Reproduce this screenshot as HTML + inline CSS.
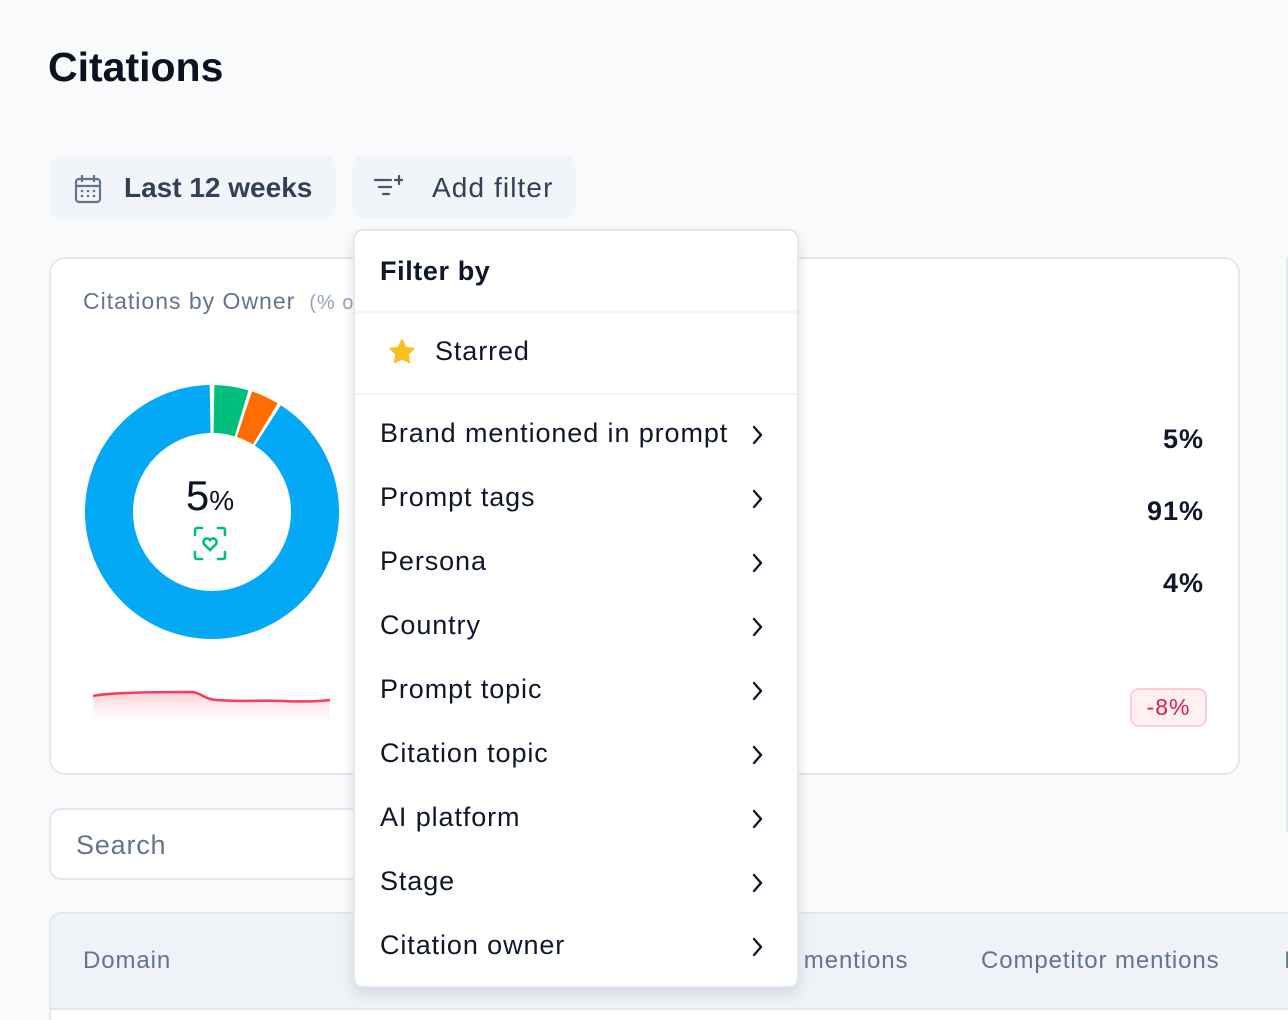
<!DOCTYPE html>
<html><head><meta charset="utf-8"><style>
*{box-sizing:border-box;margin:0;padding:0}
html,body{width:1288px;height:1020px;overflow:hidden}
body{background:#f8fafc;font-family:"Liberation Sans",sans-serif;position:relative;color:#0f172a}
.abs{position:absolute}
h1{position:absolute;left:48px;top:44px;font-size:41px;font-weight:700;color:#0b1220}
.btn{position:absolute;top:156px;height:63px;background:#f1f5f9;border-radius:12px;color:#334155;font-size:28px;font-weight:700;display:flex;align-items:center}
.card{position:absolute;left:49px;top:257px;width:1191px;height:518px;background:#fff;border:2px solid #e2e8f0;border-radius:16px}
.val{position:absolute;right:34px;font-size:27px;font-weight:700;color:#0f172a;letter-spacing:1px}
.dd{position:absolute;left:353px;top:229px;width:446px;height:759px;background:#fff;border:2px solid #e2e8f0;border-radius:10px;box-shadow:0 6px 14px rgba(15,23,42,.12)}
.item{position:absolute;left:25px;font-size:27px;color:#0f172a;letter-spacing:0.9px;white-space:nowrap}
.th{position:absolute;top:947px;font-size:24px;color:#64748b;letter-spacing:0.9px}
</style></head><body>
<h1>Citations</h1>
<div class="btn" style="left:49px;width:287px">
<svg class="abs" style="left:25px;top:18px" width="28" height="30" viewBox="0 0 28 30" fill="none" stroke="#64748b" stroke-width="2.2"><rect x="2" y="5" width="24" height="23" rx="3"/><path d="M2 12h24M8 1v7M20 1v7"/><g fill="#64748b" stroke="none"><circle cx="8" cy="17" r="1.3"/><circle cx="14" cy="17" r="1.3"/><circle cx="20" cy="17" r="1.3"/><circle cx="8" cy="22" r="1.3"/><circle cx="14" cy="22" r="1.3"/><circle cx="20" cy="22" r="1.3"/></g></svg>
<span style="position:absolute;left:75px">Last 12 weeks</span></div>
<div class="btn" style="left:352px;width:224px;font-weight:400">
<svg class="abs" style="left:21px;top:18px" width="30" height="26" viewBox="0 0 30 26" fill="none" stroke="#475569" stroke-width="2.2" stroke-linecap="round"><path d="M2 6h16M6 13h12M10 20h6M22 6h8M26 2v8"/></svg>
<span style="position:absolute;left:80px;letter-spacing:1.1px">Add filter</span></div>

<div class="card">
<div class="abs" style="left:32px;top:29px;font-size:23px;color:#64748b;letter-spacing:1px;white-space:nowrap">Citations by Owner <span style="color:#94a3b8;font-size:20px">&nbsp;(% o</span></div>
<svg class="abs" style="left:31px;top:123px" width="260" height="260" viewBox="0 0 260 260">
<g transform="rotate(-90 130 130)" fill="none" stroke-width="48">
<circle cx="130" cy="130" r="103" stroke="#03a9f4" stroke-dasharray="586 61" stroke-dashoffset="-59"/>
<circle cx="130" cy="130" r="103" stroke="#00bf7d" stroke-dasharray="28 619" stroke-dashoffset="-2"/>
<circle cx="130" cy="130" r="103" stroke="#ff6d00" stroke-dasharray="23 624" stroke-dashoffset="-33"/>
</g>
<text x="128" y="128" text-anchor="middle" font-size="42" font-weight="500" fill="#0b1220" font-family="Liberation Sans">5<tspan font-size="28">%</tspan></text>
<g fill="none" stroke="#00bf7d" stroke-width="2.6" stroke-linecap="round" transform="translate(112 145)"><path d="M1 8V3a2 2 0 0 1 2-2h5M24 1h5a2 2 0 0 1 2 2v5M31 25v5a2 2 0 0 1-2 2h-5M8 32H3a2 2 0 0 1-2-2v-5"/><path d="M16 23l-6-6a3.3 3.3 0 0 1 6-4a3.3 3.3 0 0 1 6 4z"/></g>
</svg>
<svg class="abs" style="left:41px;top:420px" width="240" height="50" viewBox="0 0 240 50"><defs><linearGradient id="g" x1="0" y1="0" x2="0" y2="1"><stop offset="0" stop-color="#fecdd3"/><stop offset="1" stop-color="#fff" stop-opacity="0"/></linearGradient></defs>
<path d="M1 17C10 15 30 13 100 13C110 14 112 20 124 21C150 23 170 21 190 22C215 23 230 22 238 21V50H1Z" fill="url(#g)"/>
<path d="M1 17C10 15 30 13 100 13C110 14 112 20 124 21C150 23 170 21 190 22C215 23 230 22 238 21" fill="none" stroke="#f43f5e" stroke-width="2.6"/></svg>
<div class="val" style="top:165px">5%</div>
<div class="val" style="top:237px">91%</div>
<div class="val" style="top:309px">4%</div>
<div class="abs" style="left:1079px;top:429px;width:77px;height:39px;background:#fff1f2;border:2px solid #fecdd3;border-radius:9px;color:#e11d48;font-size:23px;text-align:center;line-height:35px;letter-spacing:1px">-8%</div>
</div>
<div class="abs" style="left:1286px;top:257px;width:2px;height:575px;background:#e2e8f0"></div>

<div class="abs" style="left:49px;top:808px;width:400px;height:72px;background:#fff;border:2px solid #e2e8f0;border-radius:12px;font-size:27px;color:#64748b;padding:20px 0 0 25px;letter-spacing:0.8px">Search</div>

<div class="abs" style="left:49px;top:912px;width:1239px;height:108px;background:#eff3f8;border:2px solid #e2e8f0;border-right:none;border-bottom:none;border-radius:12px 0 0 0"></div>
<div class="abs" style="left:51px;top:1008px;width:1237px;height:12px;background:#fff;border-top:2px solid #e2e8f0"></div>
<div class="th" style="left:83px">Domain</div>
<div class="th" style="left:790px">l mentions</div>
<div class="th" style="left:981px">Competitor mentions</div>
<div class="th" style="left:1284px">I</div>

<div class="dd">
<div class="item" style="top:25px;font-weight:700;letter-spacing:0.6px">Filter by</div>
<div class="abs" style="left:0;right:0;top:80px;height:2px;background:#f1f5f9"></div>
<svg class="abs" style="left:32px;top:106px" width="30" height="30" viewBox="0 0 24 24"><path d="M12 2.5l2.9 6 6.4.8-4.7 4.5 1.2 6.4L12 17.1l-5.8 3.1 1.2-6.4L2.7 9.3l6.4-.8z" fill="#fbbf24" stroke="#fbbf24" stroke-width="1.5" stroke-linejoin="round"/></svg>
<div class="item" style="left:80px;top:105px">Starred</div>
<div class="abs" style="left:0;right:0;top:162px;height:2px;background:#f1f5f9"></div>
<div class="item" style="top:187px">Brand mentioned in prompt</div>
<div class="item" style="top:251px">Prompt tags</div>
<div class="item" style="top:315px">Persona</div>
<div class="item" style="top:379px">Country</div>
<div class="item" style="top:443px">Prompt topic</div>
<div class="item" style="top:507px">Citation topic</div>
<div class="item" style="top:571px">AI platform</div>
<div class="item" style="top:635px">Stage</div>
<div class="item" style="top:699px">Citation owner</div>
<svg class="abs" style="left:395px;top:193px" width="16" height="660" viewBox="0 0 16 660" fill="none" stroke="#0f172a" stroke-width="2.4" stroke-linecap="round" stroke-linejoin="round">
<path d="M4 3l7 8-7 8"/><path d="M4 67l7 8-7 8"/><path d="M4 131l7 8-7 8"/><path d="M4 195l7 8-7 8"/><path d="M4 259l7 8-7 8"/><path d="M4 323l7 8-7 8"/><path d="M4 387l7 8-7 8"/><path d="M4 451l7 8-7 8"/><path d="M4 515l7 8-7 8"/></svg>
</div>
</body></html>
